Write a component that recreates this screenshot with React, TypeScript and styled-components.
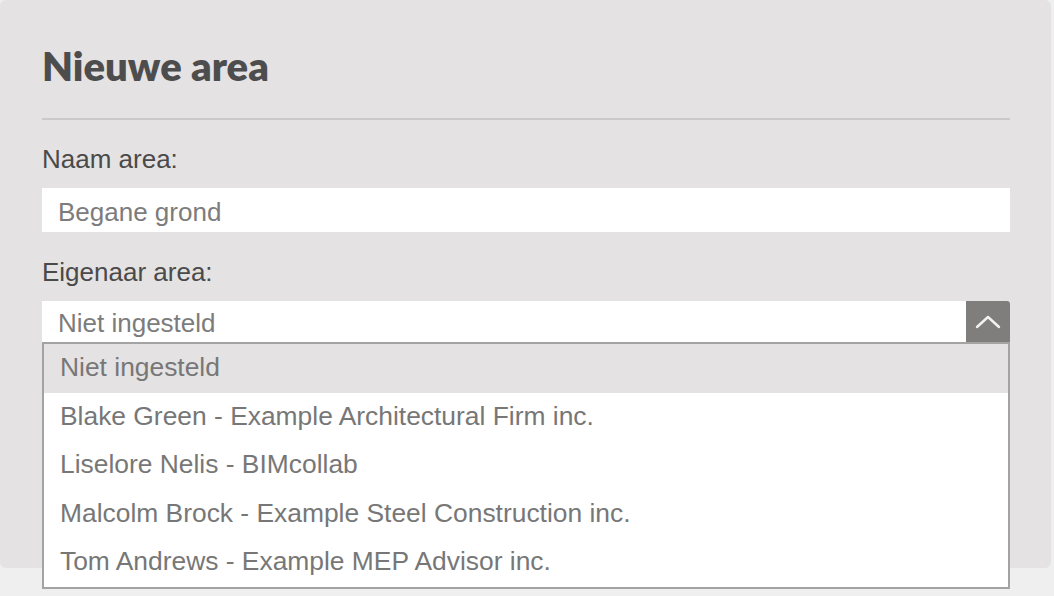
import React from 'react';
import styled, {createGlobalStyle} from "styled-components";

const GlobalStyle = createGlobalStyle`
    html, body {
        margin: 0;
        background: #efefef;
        font-family: "Liberation Sans", Arial, sans-serif;
    }
`

const owners = [
    "Niet ingesteld",
    "Blake Green - Example Architectural Firm inc.",
    "Liselore Nelis - BIMcollab",
    "Malcolm Brock - Example Steel Construction inc.",
    "Tom Andrews - Example MEP Advisor inc.",
]

const ChevronUp = () => (
    <svg width="26" height="15" viewBox="0 0 26 15">
        <path d="M2 13 L13 3 L24 13" fill="none" stroke="#f2f2f2" strokeWidth="2.4" strokeLinecap="round" strokeLinejoin="round"/>
    </svg>
)

export default function App() {
    const selected = 0;
    return (
        <Page>
            <GlobalStyle/>
            <Panel>
                <Title>Nieuwe area</Title>
                <Divider/>
                <Label>Naam area:</Label>
                <TextInput>Begane grond</TextInput>
                <Label gap={25}>Eigenaar area:</Label>
                <SelectBox>
                    <SelectValue>{owners[selected]}</SelectValue>
                    <ToggleButton>
                        <ChevronUp/>
                    </ToggleButton>
                    <OptionList>
                        {owners.map((o, i) => (
                            <Option key={o} active={i === selected}>{o}</Option>
                        ))}
                    </OptionList>
                </SelectBox>
            </Panel>
        </Page>
    );
}

const Page = styled.div`
    min-height: 596px;
`

const Panel = styled.div`
    box-sizing: border-box;
    width: 1051px;
    height: 568px;
    padding: 42px 41px 0 42px;
    background: #e4e2e3;
    border-radius: 6px;
    display: flex;
    flex-direction: column;
`

const Title = styled.h1`
    margin: 0;
    font-family: Lato, "Open Sans", sans-serif;
    font-weight: 800;
    font-size: 40px;
    line-height: 48px;
    color: #4d4d4d;
    letter-spacing: 0;
`

const Divider = styled.div`
    margin-top: 28px;
    height: 2px;
    background: #cacaca;
`

const Label = styled.div<{ gap?: number }>`
    margin-top: ${p => p.gap ?? 24}px;
    font-size: 26px;
    line-height: 30px;
    color: #4a4a4a;
`

const TextInput = styled.div`
    box-sizing: border-box;
    margin-top: 14px;
    height: 44px;
    padding: 4px 16px 0;
    background: #fff;
    font-size: 26px;
    line-height: 40px;
    color: #7c7c7c;
`

const SelectBox = styled.div`
    position: relative;
    margin-top: 14px;
    height: 41px;
    display: flex;
    background: #fff;
    border-radius: 0 3px 0 0;
`

const SelectValue = styled.div`
    flex: 1;
    padding: 3px 16px 0;
    font-size: 26px;
    line-height: 38px;
    color: #7c7c7c;
`

const ToggleButton = styled.div`
    width: 44px;
    display: flex;
    align-items: center;
    justify-content: center;
    background: #7f7e7c;
    border-radius: 0 3px 0 0;
`

const OptionList = styled.div`
    position: absolute;
    z-index: 2;
    top: 100%;
    left: 0;
    right: 0;
    border: 2px solid #a3a3a3;
    background: #fff;
`

const Option = styled.div<{ active?: boolean }>`
    height: 48.5px;
    padding: 0 16px;
    font-size: 26.4px;
    line-height: 46px;
    color: #777;
    background: ${p => p.active ? "#e4e2e3" : "#fff"};
`
